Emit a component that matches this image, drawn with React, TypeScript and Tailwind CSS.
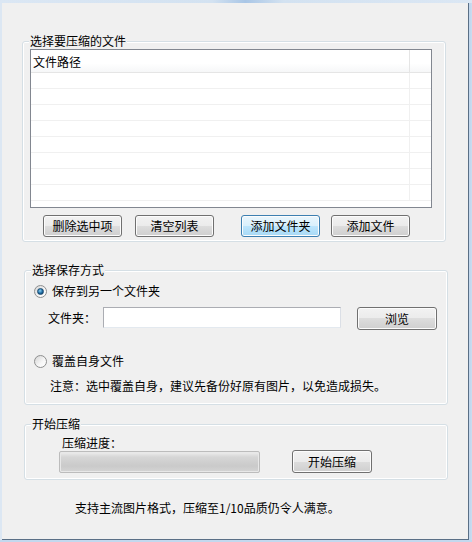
import React from "react";

// Win7 风格的图片压缩窗口（客户区 + 一点窗框）

const btn =
  "flex h-[22px] w-[79px] shrink-0 items-center justify-center rounded-[3px] border border-[#707070] bg-[linear-gradient(#f2f2f2,#ebebeb_50%,#dddddd_50%,#cfcfcf)] text-[12px] leading-none text-black shadow-[inset_0_0_0_1px_#fcfcfc]";
const btnDefault =
  "flex h-[22px] w-[79px] shrink-0 items-center justify-center rounded-[3px] border border-[#3c7fb1] bg-[linear-gradient(#eaf6fd,#d9f0fc_50%,#bee6fd_50%,#a7d9f5)] text-[12px] leading-none text-black shadow-[inset_0_0_0_1px_#fcfcfc]";

function GroupBox({
  title,
  className,
  children,
}: {
  title: string;
  className: string;
  children: React.ReactNode;
}) {
  return (
    <div className={`relative rounded-[3px] border border-[#d5dfe5] shadow-[inset_0_0_0_1px_#ffffff] ${className}`}>
      <span className="absolute -top-[8px] left-[6px] bg-[#f0f0f0] px-[1px] text-[12px] leading-[14px]">{title}</span>
      {children}
    </div>
  );
}

function Radio({ checked }: { checked?: boolean }) {
  return (
    <span className="flex h-[13px] w-[13px] shrink-0 items-center justify-center rounded-full border border-[#8e8f8f] bg-[linear-gradient(135deg,#d5d5d5,#f7f7f7_60%,#ffffff)]">
      {checked && (
        <span className="h-[7px] w-[7px] rounded-full border border-[#1b4a6f] bg-[radial-gradient(circle_at_40%_35%,#8ad1f3,#1d6aa2_55%,#0a2f4f)]" />
      )}
    </span>
  );
}

export default function App() {
  const rows = Array.from({ length: 8 });
  return (
    <div className="flex h-[542px] w-[472px] flex-col bg-[#c9dcef] font-['Noto_Sans_CJK_SC','Liberation_Sans',sans-serif] text-[12px] text-black">
      <div className="h-[3px] shrink-0 bg-[linear-gradient(90deg,#dbe7f4,#d3e2f1_45%,#a9c6e6_52%,#d3e2f1_60%,#dbe7f4)]" />
      <div className="flex min-h-0 flex-1">
        <div className="w-[2px] shrink-0 bg-[#dce7f3]" />
        <div className="flex w-[467px] shrink-0 flex-col border-r border-b border-[#5a6f86] bg-[#f0f0f0]">
          {/* 选择要压缩的文件 */}
          <GroupBox title="选择要压缩的文件" className="ml-[20px] mt-[38px] h-[201px] w-[424px] shrink-0">
            <div className="ml-[7px] mt-[7px] flex h-[159px] w-[402px] flex-col border border-[#828790] bg-white">
              <div className="flex h-[23px] shrink-0 border-b border-[#e5e5e5] bg-[linear-gradient(#ffffff,#ffffff_60%,#f6f7f8)]">
                <div className="flex w-[379px] items-center border-r border-[#e5e5e5] pl-[2px] pt-[2px] leading-none">文件路径</div>
                <div className="flex-1" />
              </div>
              {rows.map((_, i) => (
                <div key={i} className="flex h-[16px] shrink-0 border-b border-[#f0f0f0]">
                  <div className="w-[379px] border-r border-[#f0f0f0]" />
                  <div className="flex-1" />
                </div>
              ))}
            </div>
            <div className="mt-[7px] flex">
              <button className={`${btn} ml-[20px]`}>删除选中项</button>
              <button className={`${btn} ml-[13px]`}>清空列表</button>
              <button className={`${btnDefault} ml-[27px]`}>添加文件夹</button>
              <button className={`${btn} ml-[11px]`}>添加文件</button>
            </div>
          </GroupBox>

          {/* 选择保存方式 */}
          <GroupBox title="选择保存方式" className="ml-[22px] mt-[28px] h-[135px] w-[424px] shrink-0">
            <div className="ml-[9px] mt-[12px] flex h-[16px] items-center gap-[5px]">
              <Radio checked />
              <span className="leading-none">保存到另一个文件夹</span>
            </div>
            <div className="mt-[8px] flex h-[23px] items-start">
              <span className="ml-[23px] mt-[4px] leading-[14px]">文件夹：</span>
              <div className="ml-[7px] h-[21px] w-[238px] border border-[#abadb3] border-r-[#dbdfe6] border-b-[#e3e9ef] bg-white" />
              <button className={`${btn} ml-[16px] h-[23px] w-[80px]`}>浏览</button>
            </div>
            <div className="ml-[9px] mt-[23px] flex h-[16px] items-center gap-[5px]">
              <Radio />
              <span className="leading-none">覆盖自身文件</span>
            </div>
            <div className="ml-[25px] mt-[9px] flex h-[16px] items-center leading-none">
              注意：选中覆盖自身，建议先备份好原有图片，以免造成损失。
            </div>
          </GroupBox>

          {/* 开始压缩 */}
          <GroupBox title="开始压缩" className="ml-[22px] mt-[19px] h-[56px] w-[424px] shrink-0">
            <div className="ml-[37px] mt-[11px] flex h-[14px] items-center leading-none">压缩进度：</div>
            <div className="flex items-start">
              <div className="ml-[34px] mt-[1px] h-[22px] w-[201px] rounded-[2px] border border-[#bcbcbc] bg-[linear-gradient(#eeeeee,#d6d6d6_25%,#cacaca_70%,#d4d4d4)] shadow-[inset_0_0_0_1px_#e8e8e8]" />
              <button className={`${btn} ml-[32px] h-[23px] w-[80px]`}>开始压缩</button>
            </div>
          </GroupBox>

          <div className="ml-[73px] mt-[20px] flex h-[16px] items-center leading-none">
            支持主流图片格式，压缩至1/10品质仍令人满意。
          </div>
        </div>
        <div className="w-[2px] shrink-0 bg-[#c3d8ee]" />
      </div>
      <div className="h-[2px] shrink-0 bg-[#c3d8ee]" />
    </div>
  );
}
